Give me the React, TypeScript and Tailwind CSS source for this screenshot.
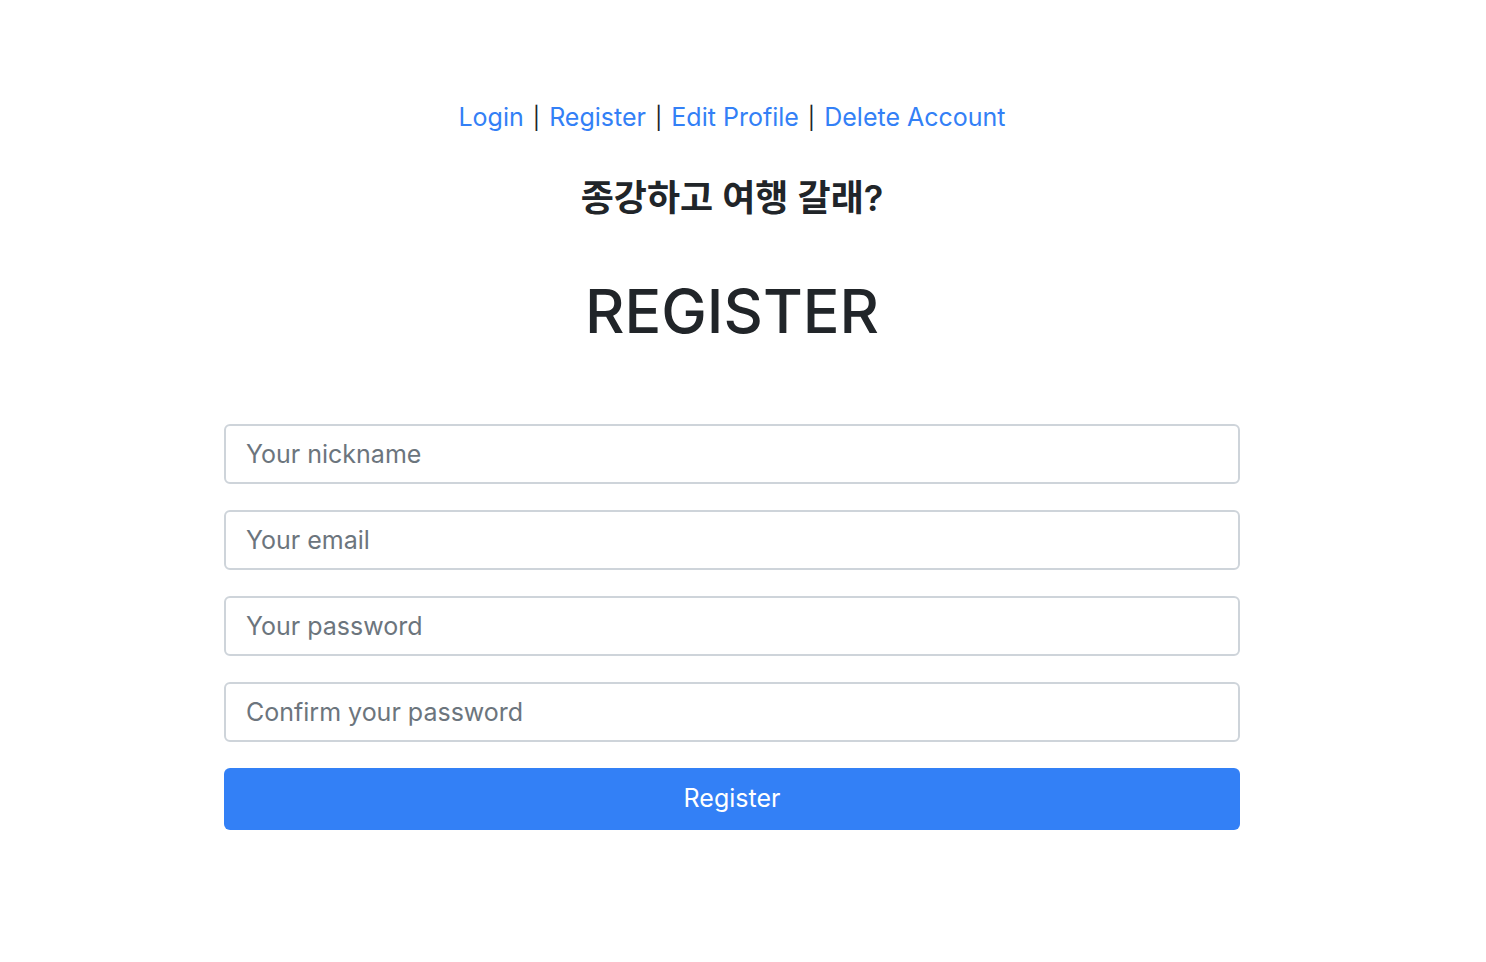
export default function App() {
  const fields = ['Your nickname', 'Your email', 'Your password', 'Confirm your password']
  const Bar = () => <span className="mx-[2px] text-[22px] font-normal text-[#212529]">|</span>
  return (
    <div className="min-h-screen bg-white font-['Inter','Noto_Sans_CJK_KR',sans-serif] text-[#212529]">
      <div className="flex w-[1464px] flex-col items-center pt-[99px]">
        <nav className="text-[25px] leading-[36px]">
          <a href="#" className="text-[#3380f6]">Login</a> <Bar />{' '}
          <a href="#" className="text-[#3380f6]">Register</a> <Bar />{' '}
          <a href="#" className="text-[#3380f6]">Edit Profile</a> <Bar />{' '}
          <a href="#" className="text-[#3380f6]">Delete Account</a>
        </nav>
        <h2 className="mt-[40px] text-[36px] font-semibold leading-[44px]">종강하고 여행 갈래?</h2>
        <h1 className="mt-[55px] text-[61px] font-medium leading-[72px]">REGISTER</h1>
        <form className="mt-[77px] flex w-[1016px] flex-col gap-[26px]">
          {fields.map((f) => (
            <input
              key={f}
              type="text"
              placeholder={f}
              className="h-[60px] w-full rounded-[6px] border-2 border-[#ced4da] px-[20px] text-[25px] text-[#212529] placeholder:text-[#6c757d] outline-none"
            />
          ))}
          <button
            type="button"
            className="h-[62px] w-full rounded-[6px] bg-[#3380f6] text-[25px] text-white"
          >
            Register
          </button>
        </form>
      </div>
    </div>
  )
}
